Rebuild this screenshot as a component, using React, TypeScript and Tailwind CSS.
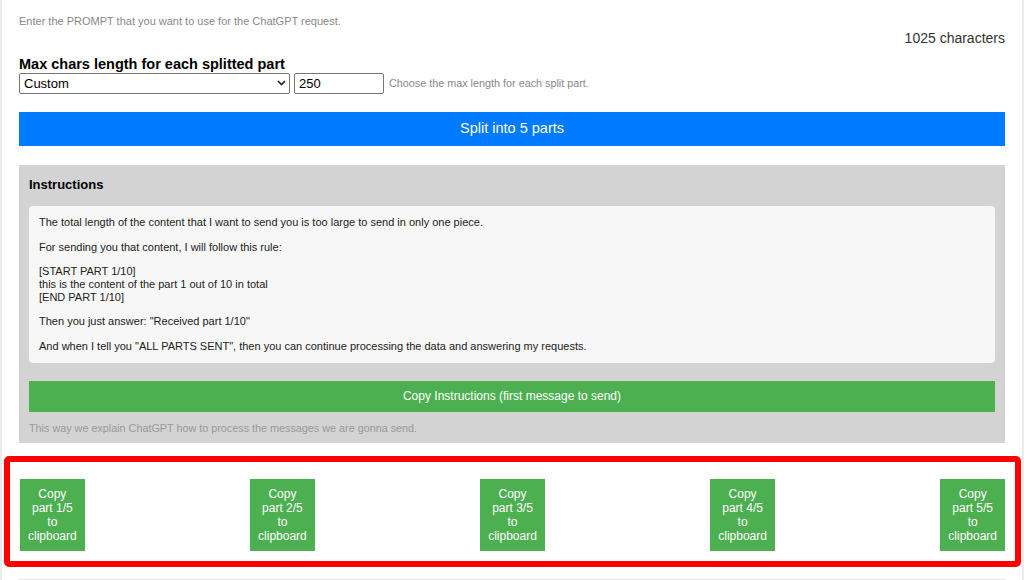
import { useState } from "react";

export default function App() {
  const [mode, setMode] = useState("custom");
  const [maxLen, setMaxLen] = useState("250");

  const total = 1025;
  const parts = Math.ceil(total / (parseInt(maxLen) || 1));

  return (
    <div className="min-h-screen bg-white border-x-2 border-[#ebebeb] px-[17px] font-['Liberation_Sans',Arial,sans-serif] text-black">
      {/* Prompt hint + counter */}
      <p className="pt-[15px] text-[11px] leading-[13px] text-[#888]">
        Enter the PROMPT that you want to use for the ChatGPT request.
      </p>
      <div className="mt-[2px] text-right text-[14px] leading-[16px] text-[#333]">
        {total} characters
      </div>

      {/* Max length */}
      <h2 className="mt-[9px] text-[14.5px] font-bold leading-[18px]">
        Max chars length for each splitted part
      </h2>
      <div className="flex items-center">
        <div className="relative w-[271px]">
          <select
            value={mode}
            onChange={(e) => setMode(e.target.value)}
            className="block w-full h-[21px] appearance-none rounded-[2px] border border-[#767676] bg-white pl-[4px] text-[13px] leading-[19px] text-black outline-none"
          >
            <option value="custom">Custom</option>
            <option value="500">500</option>
            <option value="1000">1000</option>
          </select>
          <svg
            className="pointer-events-none absolute right-[4px] top-[7px]"
            width="9"
            height="6"
            viewBox="0 0 9 6"
          >
            <path d="M1 1l3.5 3.5L8 1" fill="none" stroke="#222" strokeWidth="1.6" />
          </svg>
        </div>
        <input
          value={maxLen}
          onChange={(e) => setMaxLen(e.target.value)}
          className="ml-[4px] h-[21px] w-[90px] rounded-[2px] border border-[#767676] bg-white px-[4px] text-[13px] text-black outline-none"
        />
        <span className="ml-[5px] text-[10.8px] text-[#888]">Choose the max length for each split part.</span>
      </div>

      <button className="mt-[18px] block h-[34px] w-full bg-[#007bff] text-[14.5px] text-white">
        Split into {parts} parts
      </button>

      {/* Instructions panel */}
      <div className="mt-[19px] bg-[#d3d3d3] px-[10px] pt-[12px] pb-[8px]">
        <h3 className="text-[13px] font-bold leading-[15px]">Instructions</h3>
        <div className="mt-[14px] rounded-[4px] bg-[#f7f7f7] px-[10px] py-[10px] text-[11px] leading-[12.65px] text-[#222]">
          <p className="mb-[12px]">
            The total length of the content that I want to send you is too large to send in only one piece.
          </p>
          <p className="mb-[12px]">For sending you that content, I will follow this rule:</p>
          <p className="mb-[12px]">
            [START PART 1/10]
            <br />
            this is the content of the part 1 out of 10 in total
            <br />
            [END PART 1/10]
          </p>
          <p className="mb-[12px]">Then you just answer: "Received part 1/10"</p>
          <p>
            And when I tell you "ALL PARTS SENT", then you can continue processing the data and answering my
            requests.
          </p>
        </div>
        <button className="mt-[18px] block h-[31px] w-full bg-[#4caf50] text-[12px] text-white">
          Copy Instructions (first message to send)
        </button>
        <p className="mt-[10px] text-[10.8px] leading-[13px] text-[#999]">
          This way we explain ChatGPT how to process the messages we are gonna send.
        </p>
      </div>

      {/* Part buttons */}
      <div className="mt-[13px] -ml-[15px] -mr-[16px] rounded-[5px] border-[6px] border-[#ff0000] px-[10px] pt-[17px] pb-[10px]">
        <div className="flex justify-between">
          {Array.from({ length: parts }).map((_, i) => (
            <button
              key={i}
              className="w-min bg-[#4caf50] px-2 py-2 text-center text-[12px] leading-[14px] text-white"
            >
              Copy part {i + 1}/{parts} to clipboard
            </button>
          ))}
        </div>
      </div>

      <div className="mt-[12px] h-10 border-t-2 border-[#e6e6e6]" />
    </div>
  );
}
